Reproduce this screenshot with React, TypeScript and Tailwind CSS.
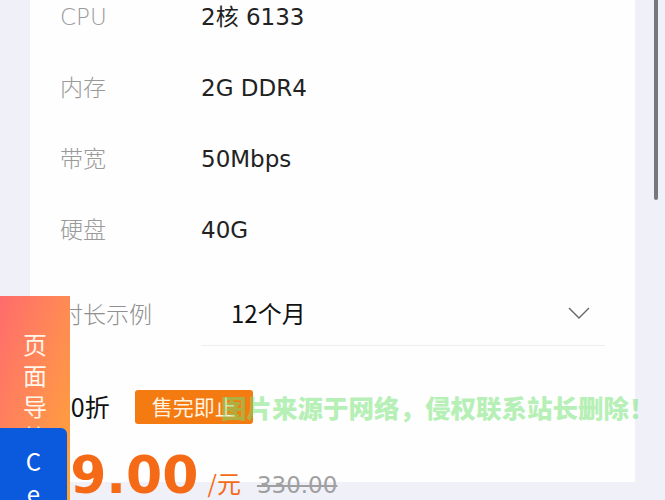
const specs = [
  { label: "CPU", value: "2核 6133" },
  { label: "内存", value: "2G DDR4" },
  { label: "带宽", value: "50Mbps" },
  { label: "硬盘", value: "40G" },
];

const latin = { fontFamily: '"DejaVu Sans", "Noto Sans CJK SC", sans-serif' };
const cjk = { fontFamily: '"Noto Sans CJK SC", "Noto Sans", sans-serif' };

function Chevron() {
  return (
    <svg width="22" height="12" viewBox="0 0 22 12" fill="none">
      <polyline points="1,1 11,11 21,1" stroke="#666" strokeWidth="1.4" />
    </svg>
  );
}

export default function App() {
  return (
    <div className="relative h-[500px] w-full overflow-hidden bg-[#f0f0f9]" style={latin}>
      <div className="ml-[30px] h-full w-[605px] bg-[#fefefe]">
        <div className="-mt-[18px] flex flex-col pl-[30px]">
          {specs.map((s) => (
            <div key={s.label} className="flex h-[71px] items-center text-[23px]">
              <span className="w-[141px] font-light text-[#9a9a9a]">{s.label}</span>
              <span className="text-[#222]">{s.value}</span>
            </div>
          ))}

          <div className="mt-[14px] flex h-[66px] items-center" style={cjk}>
            <span className="w-[141px] text-[23px] font-light text-[#8f8f8f]">时长示例</span>
            <div className="flex h-full w-[404px] items-center justify-between border-b border-[#eeeef2] pl-[30px] pr-[15px]">
              <span className="text-[24px] text-[#111]">12个月</span>
              <Chevron />
            </div>
          </div>
        </div>

        <div className="mt-[44px] flex h-[34px] items-center pl-[20px]" style={cjk}>
          <span className="text-[25px] text-[#111]">3.0折</span>
          <span className="ml-[25px] flex h-[34px] w-[118px] items-center justify-center rounded-[3px] bg-[#f47a12] text-[21px] text-[#fff3e0]">
            售完即止
          </span>
        </div>

        <div className="mt-[25px] flex items-baseline pl-[4px]">
          <span className="text-[52px] font-bold leading-none text-[#f56a16]">99.00</span>
          <span className="ml-[9px] text-[24px] text-[#f56a16]" style={cjk}>/元</span>
          <span className="ml-[16px] text-[23px] text-[#a0a0a0] line-through">330.00</span>
        </div>
      </div>

      <div
        className="pointer-events-none absolute left-[221px] top-[388px] whitespace-nowrap text-[25.5px] font-black text-[rgba(110,226,110,0.52)]"
        style={cjk}
      >
        图片来源于网络，侵权联系站长删除！
      </div>

      <div
        className="absolute left-0 top-[296px] flex h-[210px] w-[70px] flex-col items-center bg-gradient-to-br from-[#ff6b6b] to-[#ffa62a] pt-[32px] text-[24px] leading-[31px] text-[#fff6ea]"
        style={cjk}
      >
        {"页面导航".split("").map((c) => (
          <span key={c}>{c}</span>
        ))}
      </div>

      <div
        className="absolute left-0 top-[428px] flex h-[100px] w-[67px] flex-col items-center rounded-tr-[6px] bg-[#0b5ade] pt-[17px] text-[24px] leading-[32px] text-white"
        style={cjk}
      >
        {"Ce".split("").map((c) => (
          <span key={c}>{c}</span>
        ))}
      </div>

      <div className="absolute right-[7px] top-0 h-[200px] w-[4px] rounded-b-full bg-[#77777c]" />
    </div>
  );
}
